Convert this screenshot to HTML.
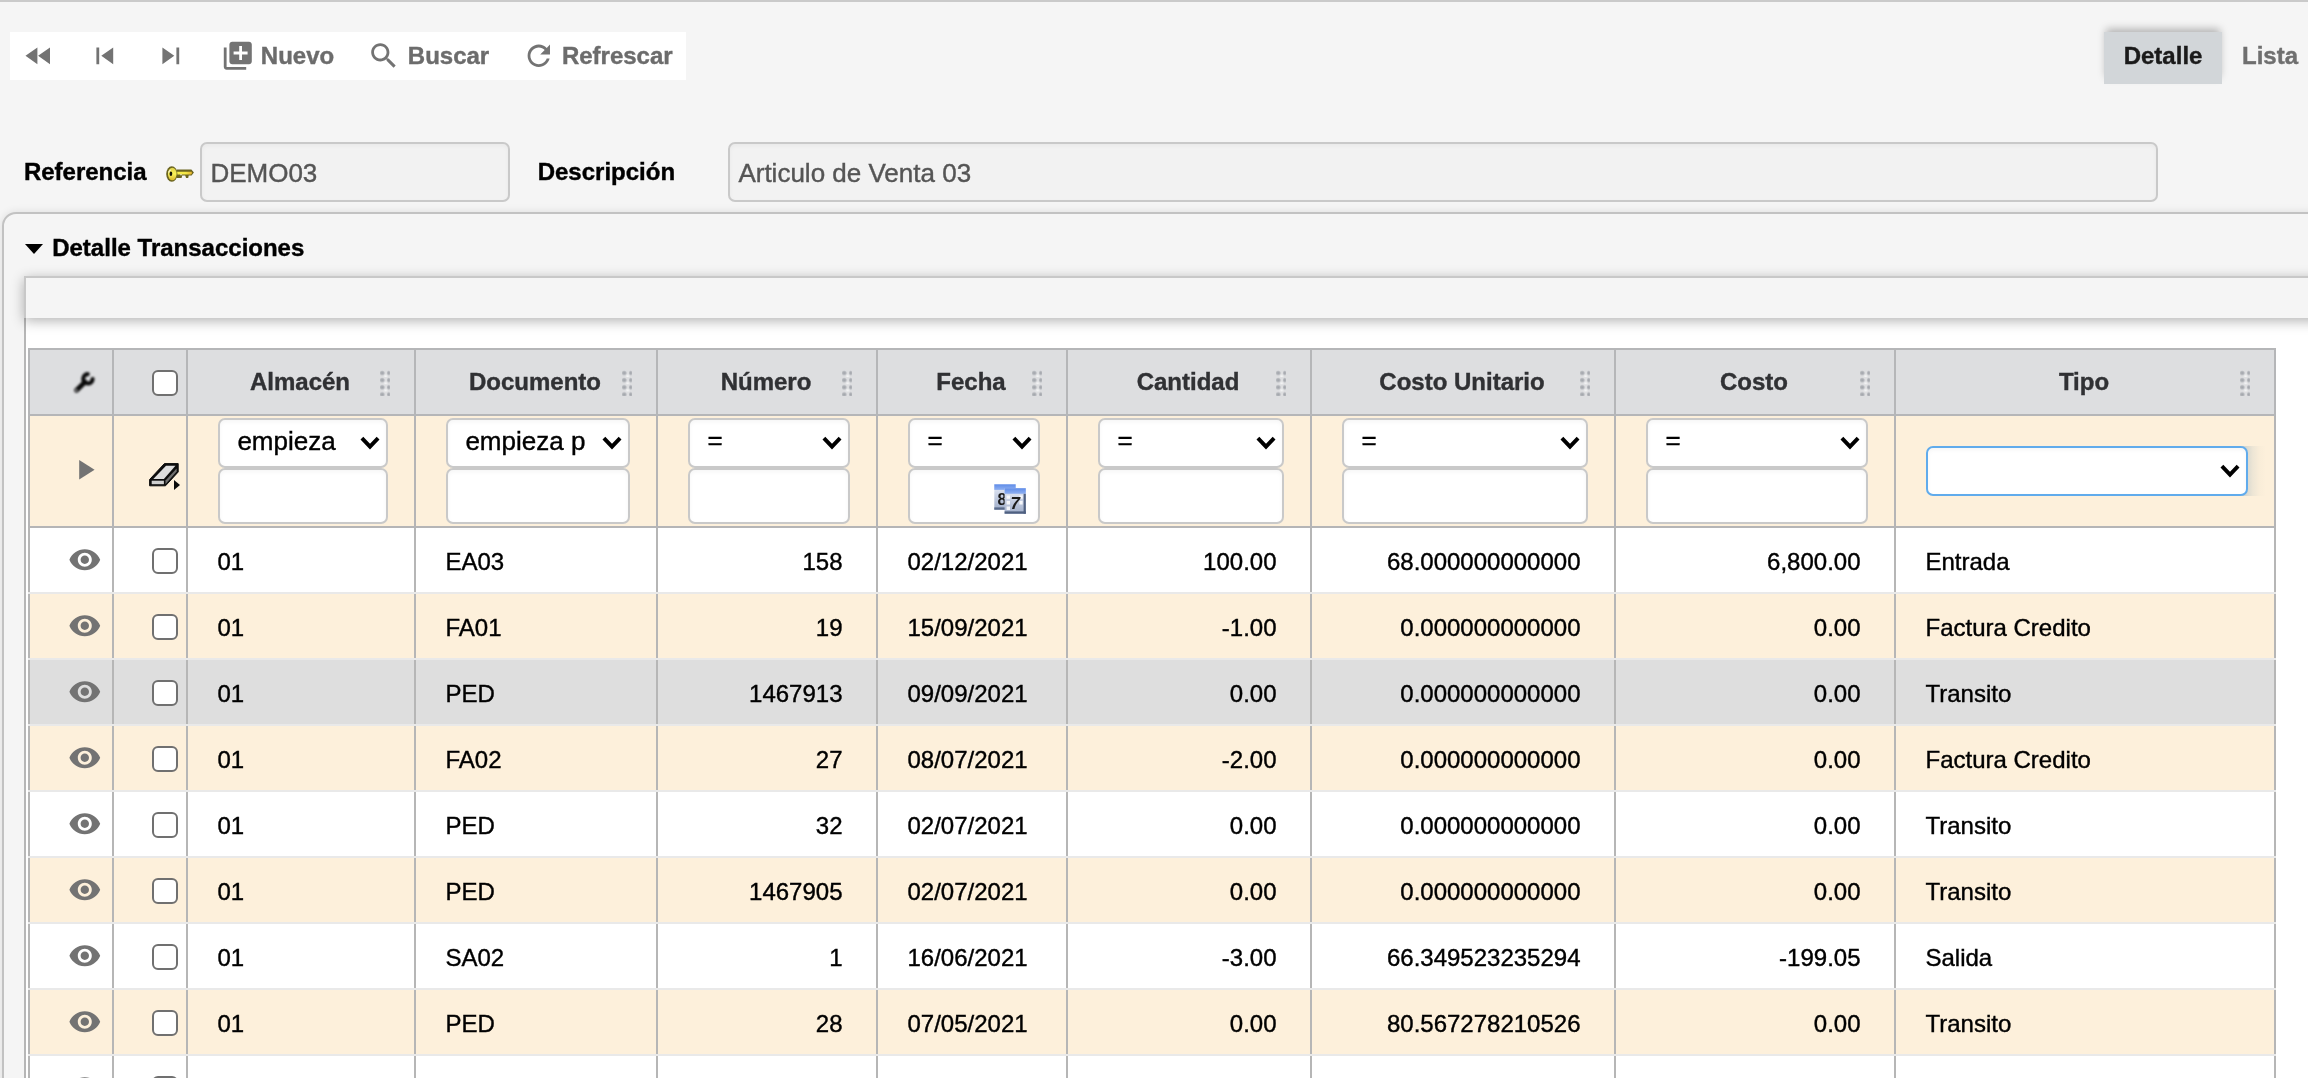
<!DOCTYPE html>
<html lang="es"><head><meta charset="utf-8"><title>Detalle Transacciones</title>
<style>
html,body{margin:0;padding:0;width:2308px;height:1078px}
body{-webkit-text-stroke:0.4px;background:#f5f5f5;font-family:"Liberation Sans",Arial,Helvetica,sans-serif;color:#000}
#page{position:relative;width:2308px;height:1078px;overflow:hidden;background:#f5f5f5}
#aa{position:absolute;left:0;top:0;width:2308px;height:1078px;will-change:transform;transform:translateZ(0)}
#page *{box-sizing:border-box}
.topline{position:absolute;left:0;top:0;width:2308px;height:2px;background:#cacaca}
.mi{position:absolute;display:block}
.toolbar{position:absolute;left:10px;top:32px;width:676px;height:48px;background:#fff}
.tbt{position:absolute;top:8.6px;height:30px;line-height:30px;font-size:24px;font-weight:bold;color:#6c6c6c;white-space:nowrap}
.tab-on{position:absolute;left:2104px;top:32px;width:118px;height:52px;background:#d2d6d9;box-shadow:0 -5px 8px -2px rgba(0,0,0,.28)}
.tab-on span{position:absolute;left:19.7px;top:9px;line-height:30px;font-size:24px;font-weight:bold;color:#1a1a1a}
.tab-off{position:absolute;left:2242px;top:41px;line-height:30px;font-size:24px;font-weight:bold;color:#6f6f6f}
.lbl{position:absolute;top:157px;line-height:30px;font-size:24px;font-weight:bold;color:#000;white-space:nowrap}
.key{position:absolute;left:166px;top:166px;width:28px;height:16px;overflow:visible;filter:blur(.45px)}
.inp{position:absolute;top:142px;height:60px;border:2px solid #c9c9c9;border-radius:7px;background:#f2f2f2;box-shadow:inset 0 2px 4px rgba(0,0,0,.04)}
.inp span{position:absolute;left:8.4px;top:13.9px;line-height:30px;font-size:26px;color:#555;white-space:nowrap}
.fs{position:absolute;left:2px;top:212px;width:2400px;height:1000px;border:2px solid #c2c2c2;border-radius:14px;background:#f5f5f5;box-shadow:0 0 8px rgba(0,0,0,.10)}
.fs-tri{position:absolute;left:21.4px;top:29.6px;width:0;height:0;border-left:9.8px solid transparent;border-right:9.8px solid transparent;border-top:10.5px solid #000}
.fs-title{position:absolute;left:48.2px;top:19.2px;line-height:30px;font-size:24px;font-weight:bold;color:#000;white-space:nowrap}
.gridwrap{position:absolute;left:24px;top:318px;width:2400px;height:900px;background:#fff;border-left:2px solid #b6b6b6}
.gridbar{position:absolute;left:24px;top:276px;width:2400px;height:42px;background:#f5f5f5;border-top:2px solid #c8c8c8;border-left:2px solid #c8c8c8;box-shadow:0 3px 12px rgba(0,0,0,.30)}
.tbl{position:absolute;left:28px;top:348px;width:2248px;height:760px}
.hrow{position:absolute;left:0;top:0;width:2248px;height:68px;background:#b5b6b8}
.hc{position:absolute;top:2px;height:64px;margin-left:2px;background:#dddee0;text-align:center}
.ht{position:absolute;left:0;right:2px;top:17px;line-height:30px;font-size:24px;font-weight:bold;color:#303134;white-space:nowrap}
.grip{position:absolute;right:24px;top:20px;width:10px;height:26px;background-repeat:repeat-y;background-size:10px 7.17px;
 background-image:radial-gradient(ellipse 3px 2.7px at 2.2px 3px,rgba(146,150,157,.8) 0%,rgba(146,150,157,.58) 55%,rgba(146,150,157,0) 100%),radial-gradient(ellipse 2.1px 2.7px at 8.7px 3px,rgba(146,150,157,.8) 0%,rgba(146,150,157,.58) 55%,rgba(146,150,157,0) 100%),radial-gradient(ellipse 2.6px 2.6px at 5.7px 6.4px,rgba(255,255,255,.75) 0%,rgba(255,255,255,0) 100%)}
.wrench{position:absolute;left:38.7px;top:18.5px;width:28px;height:28px;filter:blur(.9px)}
.cb{position:absolute;width:26px;height:26px;border:2px solid #707070;border-radius:6px;background:#fff}
.frow{position:absolute;left:0;top:68px;width:2248px;height:112px;background:#b5b5b6}
.fc{position:absolute;top:0;height:110px;margin-left:2px;background:#fdf0db}
.eraser{position:absolute;left:34px;top:45px;width:34px;height:32px}
.sel{position:absolute;height:50px;border:2px solid #c9c9c9;border-radius:7px;background:#fff;box-shadow:inset 0 2px 4px rgba(0,0,0,.04)}
.sel span{position:absolute;left:17.4px;top:6px;line-height:30px;font-size:26px;color:#000;white-space:nowrap}
.sel span.eq{top:4.9px;left:17.6px}
.sel.foc{border-color:#60abec}
.glow{position:absolute;top:30px;width:24px;height:50px;background:linear-gradient(to right,rgba(150,175,195,.5) 0,rgba(160,180,190,.36) 22%,rgba(175,188,190,.2) 45%,rgba(200,200,190,.08) 72%,rgba(220,210,190,0) 100%)}
.chev{position:absolute;right:5.8px;top:15.8px;width:20px;height:14px}
.fin{position:absolute;height:56px;border:2px solid #c9c9c9;border-radius:7px;background:#fff;box-shadow:inset 0 2px 4px rgba(0,0,0,.04)}
.cal{position:absolute;right:12px;top:14px;width:32px;height:30px;filter:blur(.4px)}
.drow{position:absolute;left:0;width:2248px;height:66px;background:#b6b6b6}
.dc{position:absolute;top:0;height:64px;margin-left:2px;background:#fff}
.drow:after{content:"";position:absolute;left:0;top:64px;width:2248px;height:2px;background:#e9e9e9}
.ro .dc{background:#fdf0db}
.rg .dc{background:#dedede}
.dc span{position:absolute;top:18.7px;line-height:30px;font-size:24px;color:#000;white-space:nowrap}
.dc.l span{left:29.5px}
.dc.r span{right:33.5px}

</style></head>
<body>
<div id="page"><div id="aa">
<div class="topline"></div>
<div class="toolbar" role="toolbar">
<svg class="mi" style="left:12.10px;top:6.60px;width:33.60px;height:33.60px" viewBox="0 0 24 24"><path fill="#737373" d="M11 18V6l-8.5 6 8.5 6zm.5-6l8.5 6V6l-8.5 6z"/></svg>
<svg class="mi" style="left:78.30px;top:6.60px;width:33.60px;height:33.60px" viewBox="0 0 24 24"><path fill="#737373" d="M6 6h2v12H6zm3.5 6l8.5 6V6z"/></svg>
<svg class="mi" style="left:144.35px;top:6.60px;width:33.60px;height:33.60px" viewBox="0 0 24 24"><path fill="#737373" d="M6 18l8.5-6L6 6v12zM16 6v12h2V6h-2z"/></svg>
<svg class="mi" style="left:210.75px;top:7.00px;width:33.60px;height:33.60px" viewBox="0 0 24 24"><path fill="#737373" d="M4 6H2v14c0 1.1.9 2 2 2h14v-2H4V6zm16-4H8c-1.1 0-2 .9-2 2v12c0 1.1.9 2 2 2h12c1.1 0 2-.9 2-2V4c0-1.1-.9-2-2-2zm-1 9h-4v4h-2v-4H9V9h4V5h2v4h4v2z"/></svg>
<span class="tbt" style="left:250.80px">Nuevo</span>
<svg class="mi" style="left:357.30px;top:7.00px;width:33.60px;height:33.60px" viewBox="0 0 24 24"><path fill="#737373" d="M15.5 14h-.79l-.28-.27C15.41 12.59 16 11.11 16 9.5 16 5.91 13.09 3 9.5 3S3 5.91 3 9.5 5.91 16 9.5 16c1.61 0 3.09-.59 4.23-1.57l.27.28v.79l5 4.99L20.49 19l-4.99-5zm-6 0C7.01 14 5 11.99 5 9.5S7.01 5 9.5 5 14 7.01 14 9.5 11.99 14 9.5 14z"/></svg>
<span class="tbt" style="left:397.80px">Buscar</span>
<svg class="mi" style="left:511.60px;top:7.00px;width:33.60px;height:33.60px" viewBox="0 0 24 24"><path fill="#737373" d="M17.65 6.35C16.2 4.9 14.21 4 12 4c-4.42 0-7.99 3.58-7.99 8s3.57 8 7.99 8c3.73 0 6.84-2.55 7.73-6h-2.08c-.82 2.33-3.04 4-5.65 4-3.31 0-6-2.69-6-6s2.69-6 6-6c1.66 0 3.14.69 4.22 1.78L13 11h7V4l-2.35 2.35z"/></svg>
<span class="tbt" style="left:551.90px">Refrescar</span>
</div>
<div class="tab-on" role="tab" aria-selected="true"><span>Detalle</span></div>
<div class="tab-off" role="tab">Lista</div>
<div class="lbl" style="left:23.90px">Referencia</div>
<svg class="key" viewBox="0 0 28 16">
<defs><linearGradient id="kg" x1="0" y1="0" x2="0" y2="1"><stop offset="0" stop-color="#ddd04a"/><stop offset=".5" stop-color="#fbf45a"/><stop offset="1" stop-color="#d6b52c"/></linearGradient>
<linearGradient id="ks" x1="0" y1="0" x2="1" y2="0"><stop offset="0" stop-color="#f7ee4c"/><stop offset=".6" stop-color="#f3e746"/><stop offset="1" stop-color="#e3ae2c"/></linearGradient></defs>
<path d="M10.5 3.6H25.4l2.5 2.9-2.3 3.1h-2.9l-.5 2.3h-2.1l-.9-2.5h-3l-.6 2.6h-5.1z" fill="#6a641f"/>
<path d="M11 5.7H25.6l.5 1.2-1 1.5H11z" fill="url(#ks)"/>
<path d="M14.2 8.2h1.6v1h-1.6z" fill="#f4f1d8"/>
<ellipse cx="5.8" cy="8" rx="5.6" ry="7.8" fill="#6a641f"/>
<ellipse cx="6.3" cy="8" rx="4.3" ry="6.3" fill="url(#kg)"/>
<ellipse cx="4.9" cy="7.7" rx="1.35" ry="2.2" fill="#14140a"/>
<path d="M2.6 6.6c.3-1.3 1.2-2.2 2.2-2.4" stroke="#f3f0d0" stroke-width="1.2" fill="none"/>
</svg>
<div class="inp" role="textbox" aria-readonly="true" style="left:200px;width:310px"><span>DEMO03</span></div>
<div class="lbl" style="left:537.70px">Descripción</div>
<div class="inp" role="textbox" aria-readonly="true" style="left:728px;width:1430px"><span>Articulo de Venta 03</span></div>
<div class="fs">
<div class="fs-tri"></div>
<div class="fs-title">Detalle Transacciones</div>
</div>
<div class="gridwrap"></div>
<div class="gridbar"></div>
<div class="tbl" role="table">
<div class="hrow" role="row">
<div class="hc" role="columnheader" style="left:0px;width:82px">
<svg class="wrench" viewBox="0 0 28 28"><path d="M16 13L7.6 21.2" stroke="#0a0a0a" stroke-width="4.8" stroke-linecap="round" fill="none"/><path d="M18.7 5.1A4.7 4.7 0 1 0 23.6 10" stroke="#0a0a0a" stroke-width="4.1" stroke-linecap="round" fill="none"/><circle cx="7.4" cy="21.3" r="1.15" fill="#c9c9cb"/></svg>
</div>
<div class="hc" role="columnheader" style="left:84px;width:72px">
<span class="cb" role="checkbox" aria-checked="false" style="left:38px;top:20px"></span>
</div>
<div class="hc" role="columnheader" style="left:158px;width:226px">
<span class="ht">Almacén</span><span class="grip"></span>
</div>
<div class="hc" role="columnheader" style="left:386px;width:240px">
<span class="ht">Documento</span><span class="grip"></span>
</div>
<div class="hc" role="columnheader" style="left:628px;width:218px">
<span class="ht">Número</span><span class="grip"></span>
</div>
<div class="hc" role="columnheader" style="left:848px;width:188px">
<span class="ht">Fecha</span><span class="grip"></span>
</div>
<div class="hc" role="columnheader" style="left:1038px;width:242px">
<span class="ht">Cantidad</span><span class="grip"></span>
</div>
<div class="hc" role="columnheader" style="left:1282px;width:302px">
<span class="ht">Costo Unitario</span><span class="grip"></span>
</div>
<div class="hc" role="columnheader" style="left:1586px;width:278px">
<span class="ht">Costo</span><span class="grip"></span>
</div>
<div class="hc" role="columnheader" style="left:1866px;width:378px">
<span class="ht">Tipo</span><span class="grip"></span>
</div>
</div>
<div class="frow" role="row">
<div class="fc" role="cell" style="left:0px;width:82px">
<svg class="mi" style="left:37.80px;top:37.00px;width:33.60px;height:33.60px" viewBox="0 0 24 24"><path fill="#737373" d="M8 5v14l11-7z"/></svg>
</div>
<div class="fc" role="cell" style="left:84px;width:72px">
<svg class="eraser" viewBox="0 0 34 32">
<path d="M1.6 24.8V18.5L16.4 2.6H30.2V11L17.5 24.8z" fill="#0d0d0d" stroke="#0d0d0d" stroke-width="1" stroke-linejoin="round"/>
<path d="M5.3 17.9L18 4.7h9.5L15.9 17.9z" fill="#dedede"/>
<path d="M3.7 19.7h12.2v3.5H3.7z" fill="#cfcfcf"/>
<path d="M17.5 19.5L28.6 7.4v3.1L17.5 23.2z" fill="#707070"/>
<path d="M26 19l6 5-6 5z" fill="#0a0a0a"/>
</svg>
</div>
<div class="fc" role="cell" style="left:158px;width:226px">
<div class="sel" role="combobox" style="left:30px;top:2px;width:170px"><span>empieza</span><svg class="chev" viewBox="0 0 20 14"><path d="M1.9 2.1l8.1 8.5 8.1-8.5" stroke="#000" stroke-width="3.9" fill="none"/></svg></div>
<div class="fin" role="textbox" style="left:30px;top:52px;width:170px">
</div>
</div>
<div class="fc" role="cell" style="left:386px;width:240px">
<div class="sel" role="combobox" style="left:30px;top:2px;width:184px"><span>empieza p</span><svg class="chev" viewBox="0 0 20 14"><path d="M1.9 2.1l8.1 8.5 8.1-8.5" stroke="#000" stroke-width="3.9" fill="none"/></svg></div>
<div class="fin" role="textbox" style="left:30px;top:52px;width:184px">
</div>
</div>
<div class="fc" role="cell" style="left:628px;width:218px">
<div class="sel" role="combobox" style="left:30px;top:2px;width:162px"><span class="eq">=</span><svg class="chev" viewBox="0 0 20 14"><path d="M1.9 2.1l8.1 8.5 8.1-8.5" stroke="#000" stroke-width="3.9" fill="none"/></svg></div>
<div class="fin" role="textbox" style="left:30px;top:52px;width:162px">
</div>
</div>
<div class="fc" role="cell" style="left:848px;width:188px">
<div class="sel" role="combobox" style="left:30px;top:2px;width:132px"><span class="eq">=</span><svg class="chev" viewBox="0 0 20 14"><path d="M1.9 2.1l8.1 8.5 8.1-8.5" stroke="#000" stroke-width="3.9" fill="none"/></svg></div>
<div class="fin" role="textbox" style="left:30px;top:52px;width:132px">
<svg class="cal" viewBox="0 0 32 30">
<defs><linearGradient id="cb" x1="0" y1="0" x2="0" y2="1"><stop offset="0" stop-color="#e9eefa"/><stop offset="1" stop-color="#9fadc9"/></linearGradient>
<linearGradient id="ch" x1="0" y1="0" x2="0" y2="1"><stop offset="0" stop-color="#5f8ce8"/><stop offset="1" stop-color="#8fb0f2"/></linearGradient></defs>
<rect x="0.3" y="0.3" width="21.4" height="25.4" fill="url(#cb)"/>
<rect x="0.3" y="0.3" width="21.4" height="5.6" fill="url(#ch)"/>
<rect x="0.3" y="23.4" width="21.4" height="2.3" fill="#5a6c8c"/>
<text x="3.4" y="20.6" font-family="Liberation Sans, sans-serif" style="font-weight:700" font-size="16" fill="#1a1a1a">8</text>
<rect x="10.6" y="4.2" width="21.2" height="25.5" fill="url(#cb)"/>
<rect x="10.6" y="4.2" width="21.2" height="5.6" fill="url(#ch)"/>
<rect x="29.6" y="9.8" width="2.2" height="19.9" fill="#4f6080"/>
<rect x="10.6" y="27.4" width="21.2" height="2.3" fill="#4f6080"/>
<path d="M12.6 11.4h3.4v3.4h-3.4zM12.6 17h3.4v3.4h-3.4zM12.6 22.6h3.4v3.4h-3.4zM25.4 11.4h3.2v3.4h-3.2zM25.4 17h3.2v3.4h-3.2z" fill="#fff" opacity=".85"/>
<text x="16.6" y="25.4" font-family="Liberation Sans, sans-serif" style="font-weight:700;font-style:italic" font-size="17" fill="#1c1c1c">7</text>
</svg>
</div>
</div>
<div class="fc" role="cell" style="left:1038px;width:242px">
<div class="sel" role="combobox" style="left:30px;top:2px;width:186px"><span class="eq">=</span><svg class="chev" viewBox="0 0 20 14"><path d="M1.9 2.1l8.1 8.5 8.1-8.5" stroke="#000" stroke-width="3.9" fill="none"/></svg></div>
<div class="fin" role="textbox" style="left:30px;top:52px;width:186px">
</div>
</div>
<div class="fc" role="cell" style="left:1282px;width:302px">
<div class="sel" role="combobox" style="left:30px;top:2px;width:246px"><span class="eq">=</span><svg class="chev" viewBox="0 0 20 14"><path d="M1.9 2.1l8.1 8.5 8.1-8.5" stroke="#000" stroke-width="3.9" fill="none"/></svg></div>
<div class="fin" role="textbox" style="left:30px;top:52px;width:246px">
</div>
</div>
<div class="fc" role="cell" style="left:1586px;width:278px">
<div class="sel" role="combobox" style="left:30px;top:2px;width:222px"><span class="eq">=</span><svg class="chev" viewBox="0 0 20 14"><path d="M1.9 2.1l8.1 8.5 8.1-8.5" stroke="#000" stroke-width="3.9" fill="none"/></svg></div>
<div class="fin" role="textbox" style="left:30px;top:52px;width:222px">
</div>
</div>
<div class="fc" role="cell" style="left:1866px;width:378px">
<div class="glow" style="left:346px"></div>
<div class="sel foc" role="combobox" style="left:30px;top:30px;width:322px"><svg class="chev" viewBox="0 0 20 14"><path d="M1.9 2.1l8.1 8.5 8.1-8.5" stroke="#000" stroke-width="3.9" fill="none"/></svg></div>
</div>
</div>
<div class="drow rw" role="row" style="top:180px">
<div class="dc" role="cell" style="left:0px;width:82px">
<svg class="mi" style="left:38.30px;top:15.05px;width:33.60px;height:33.60px" viewBox="0 0 24 24"><path fill="#737373" d="M12 4.5C7 4.5 2.73 7.61 1 12c1.73 4.39 6 7.5 11 7.5s9.27-3.11 11-7.5c-1.73-4.39-6-7.5-11-7.5zM12 17c-2.76 0-5-2.24-5-5s2.24-5 5-5 5 2.24 5 5-2.24 5-5 5zm0-8c-1.66 0-3 1.34-3 3s1.34 3 3 3 3-1.34 3-3-1.34-3-3-3z"/></svg>
</div>
<div class="dc" role="cell" style="left:84px;width:72px">
<span class="cb" role="checkbox" aria-checked="false" style="left:38px;top:20px"></span>
</div>
<div class="dc l" role="cell" style="left:158px;width:226px">
<span>01</span>
</div>
<div class="dc l" role="cell" style="left:386px;width:240px">
<span>EA03</span>
</div>
<div class="dc r" role="cell" style="left:628px;width:218px">
<span>158</span>
</div>
<div class="dc l" role="cell" style="left:848px;width:188px">
<span>02/12/2021</span>
</div>
<div class="dc r" role="cell" style="left:1038px;width:242px">
<span>100.00</span>
</div>
<div class="dc r" role="cell" style="left:1282px;width:302px">
<span>68.000000000000</span>
</div>
<div class="dc r" role="cell" style="left:1586px;width:278px">
<span>6,800.00</span>
</div>
<div class="dc l" role="cell" style="left:1866px;width:378px">
<span>Entrada</span>
</div>
</div>
<div class="drow ro" role="row" style="top:246px">
<div class="dc" role="cell" style="left:0px;width:82px">
<svg class="mi" style="left:38.30px;top:15.05px;width:33.60px;height:33.60px" viewBox="0 0 24 24"><path fill="#737373" d="M12 4.5C7 4.5 2.73 7.61 1 12c1.73 4.39 6 7.5 11 7.5s9.27-3.11 11-7.5c-1.73-4.39-6-7.5-11-7.5zM12 17c-2.76 0-5-2.24-5-5s2.24-5 5-5 5 2.24 5 5-2.24 5-5 5zm0-8c-1.66 0-3 1.34-3 3s1.34 3 3 3 3-1.34 3-3-1.34-3-3-3z"/></svg>
</div>
<div class="dc" role="cell" style="left:84px;width:72px">
<span class="cb" role="checkbox" aria-checked="false" style="left:38px;top:20px"></span>
</div>
<div class="dc l" role="cell" style="left:158px;width:226px">
<span>01</span>
</div>
<div class="dc l" role="cell" style="left:386px;width:240px">
<span>FA01</span>
</div>
<div class="dc r" role="cell" style="left:628px;width:218px">
<span>19</span>
</div>
<div class="dc l" role="cell" style="left:848px;width:188px">
<span>15/09/2021</span>
</div>
<div class="dc r" role="cell" style="left:1038px;width:242px">
<span>-1.00</span>
</div>
<div class="dc r" role="cell" style="left:1282px;width:302px">
<span>0.000000000000</span>
</div>
<div class="dc r" role="cell" style="left:1586px;width:278px">
<span>0.00</span>
</div>
<div class="dc l" role="cell" style="left:1866px;width:378px">
<span>Factura Credito</span>
</div>
</div>
<div class="drow rg" role="row" style="top:312px">
<div class="dc" role="cell" style="left:0px;width:82px">
<svg class="mi" style="left:38.30px;top:15.05px;width:33.60px;height:33.60px" viewBox="0 0 24 24"><path fill="#737373" d="M12 4.5C7 4.5 2.73 7.61 1 12c1.73 4.39 6 7.5 11 7.5s9.27-3.11 11-7.5c-1.73-4.39-6-7.5-11-7.5zM12 17c-2.76 0-5-2.24-5-5s2.24-5 5-5 5 2.24 5 5-2.24 5-5 5zm0-8c-1.66 0-3 1.34-3 3s1.34 3 3 3 3-1.34 3-3-1.34-3-3-3z"/></svg>
</div>
<div class="dc" role="cell" style="left:84px;width:72px">
<span class="cb" role="checkbox" aria-checked="false" style="left:38px;top:20px"></span>
</div>
<div class="dc l" role="cell" style="left:158px;width:226px">
<span>01</span>
</div>
<div class="dc l" role="cell" style="left:386px;width:240px">
<span>PED</span>
</div>
<div class="dc r" role="cell" style="left:628px;width:218px">
<span>1467913</span>
</div>
<div class="dc l" role="cell" style="left:848px;width:188px">
<span>09/09/2021</span>
</div>
<div class="dc r" role="cell" style="left:1038px;width:242px">
<span>0.00</span>
</div>
<div class="dc r" role="cell" style="left:1282px;width:302px">
<span>0.000000000000</span>
</div>
<div class="dc r" role="cell" style="left:1586px;width:278px">
<span>0.00</span>
</div>
<div class="dc l" role="cell" style="left:1866px;width:378px">
<span>Transito</span>
</div>
</div>
<div class="drow ro" role="row" style="top:378px">
<div class="dc" role="cell" style="left:0px;width:82px">
<svg class="mi" style="left:38.30px;top:15.05px;width:33.60px;height:33.60px" viewBox="0 0 24 24"><path fill="#737373" d="M12 4.5C7 4.5 2.73 7.61 1 12c1.73 4.39 6 7.5 11 7.5s9.27-3.11 11-7.5c-1.73-4.39-6-7.5-11-7.5zM12 17c-2.76 0-5-2.24-5-5s2.24-5 5-5 5 2.24 5 5-2.24 5-5 5zm0-8c-1.66 0-3 1.34-3 3s1.34 3 3 3 3-1.34 3-3-1.34-3-3-3z"/></svg>
</div>
<div class="dc" role="cell" style="left:84px;width:72px">
<span class="cb" role="checkbox" aria-checked="false" style="left:38px;top:20px"></span>
</div>
<div class="dc l" role="cell" style="left:158px;width:226px">
<span>01</span>
</div>
<div class="dc l" role="cell" style="left:386px;width:240px">
<span>FA02</span>
</div>
<div class="dc r" role="cell" style="left:628px;width:218px">
<span>27</span>
</div>
<div class="dc l" role="cell" style="left:848px;width:188px">
<span>08/07/2021</span>
</div>
<div class="dc r" role="cell" style="left:1038px;width:242px">
<span>-2.00</span>
</div>
<div class="dc r" role="cell" style="left:1282px;width:302px">
<span>0.000000000000</span>
</div>
<div class="dc r" role="cell" style="left:1586px;width:278px">
<span>0.00</span>
</div>
<div class="dc l" role="cell" style="left:1866px;width:378px">
<span>Factura Credito</span>
</div>
</div>
<div class="drow rw" role="row" style="top:444px">
<div class="dc" role="cell" style="left:0px;width:82px">
<svg class="mi" style="left:38.30px;top:15.05px;width:33.60px;height:33.60px" viewBox="0 0 24 24"><path fill="#737373" d="M12 4.5C7 4.5 2.73 7.61 1 12c1.73 4.39 6 7.5 11 7.5s9.27-3.11 11-7.5c-1.73-4.39-6-7.5-11-7.5zM12 17c-2.76 0-5-2.24-5-5s2.24-5 5-5 5 2.24 5 5-2.24 5-5 5zm0-8c-1.66 0-3 1.34-3 3s1.34 3 3 3 3-1.34 3-3-1.34-3-3-3z"/></svg>
</div>
<div class="dc" role="cell" style="left:84px;width:72px">
<span class="cb" role="checkbox" aria-checked="false" style="left:38px;top:20px"></span>
</div>
<div class="dc l" role="cell" style="left:158px;width:226px">
<span>01</span>
</div>
<div class="dc l" role="cell" style="left:386px;width:240px">
<span>PED</span>
</div>
<div class="dc r" role="cell" style="left:628px;width:218px">
<span>32</span>
</div>
<div class="dc l" role="cell" style="left:848px;width:188px">
<span>02/07/2021</span>
</div>
<div class="dc r" role="cell" style="left:1038px;width:242px">
<span>0.00</span>
</div>
<div class="dc r" role="cell" style="left:1282px;width:302px">
<span>0.000000000000</span>
</div>
<div class="dc r" role="cell" style="left:1586px;width:278px">
<span>0.00</span>
</div>
<div class="dc l" role="cell" style="left:1866px;width:378px">
<span>Transito</span>
</div>
</div>
<div class="drow ro" role="row" style="top:510px">
<div class="dc" role="cell" style="left:0px;width:82px">
<svg class="mi" style="left:38.30px;top:15.05px;width:33.60px;height:33.60px" viewBox="0 0 24 24"><path fill="#737373" d="M12 4.5C7 4.5 2.73 7.61 1 12c1.73 4.39 6 7.5 11 7.5s9.27-3.11 11-7.5c-1.73-4.39-6-7.5-11-7.5zM12 17c-2.76 0-5-2.24-5-5s2.24-5 5-5 5 2.24 5 5-2.24 5-5 5zm0-8c-1.66 0-3 1.34-3 3s1.34 3 3 3 3-1.34 3-3-1.34-3-3-3z"/></svg>
</div>
<div class="dc" role="cell" style="left:84px;width:72px">
<span class="cb" role="checkbox" aria-checked="false" style="left:38px;top:20px"></span>
</div>
<div class="dc l" role="cell" style="left:158px;width:226px">
<span>01</span>
</div>
<div class="dc l" role="cell" style="left:386px;width:240px">
<span>PED</span>
</div>
<div class="dc r" role="cell" style="left:628px;width:218px">
<span>1467905</span>
</div>
<div class="dc l" role="cell" style="left:848px;width:188px">
<span>02/07/2021</span>
</div>
<div class="dc r" role="cell" style="left:1038px;width:242px">
<span>0.00</span>
</div>
<div class="dc r" role="cell" style="left:1282px;width:302px">
<span>0.000000000000</span>
</div>
<div class="dc r" role="cell" style="left:1586px;width:278px">
<span>0.00</span>
</div>
<div class="dc l" role="cell" style="left:1866px;width:378px">
<span>Transito</span>
</div>
</div>
<div class="drow rw" role="row" style="top:576px">
<div class="dc" role="cell" style="left:0px;width:82px">
<svg class="mi" style="left:38.30px;top:15.05px;width:33.60px;height:33.60px" viewBox="0 0 24 24"><path fill="#737373" d="M12 4.5C7 4.5 2.73 7.61 1 12c1.73 4.39 6 7.5 11 7.5s9.27-3.11 11-7.5c-1.73-4.39-6-7.5-11-7.5zM12 17c-2.76 0-5-2.24-5-5s2.24-5 5-5 5 2.24 5 5-2.24 5-5 5zm0-8c-1.66 0-3 1.34-3 3s1.34 3 3 3 3-1.34 3-3-1.34-3-3-3z"/></svg>
</div>
<div class="dc" role="cell" style="left:84px;width:72px">
<span class="cb" role="checkbox" aria-checked="false" style="left:38px;top:20px"></span>
</div>
<div class="dc l" role="cell" style="left:158px;width:226px">
<span>01</span>
</div>
<div class="dc l" role="cell" style="left:386px;width:240px">
<span>SA02</span>
</div>
<div class="dc r" role="cell" style="left:628px;width:218px">
<span>1</span>
</div>
<div class="dc l" role="cell" style="left:848px;width:188px">
<span>16/06/2021</span>
</div>
<div class="dc r" role="cell" style="left:1038px;width:242px">
<span>-3.00</span>
</div>
<div class="dc r" role="cell" style="left:1282px;width:302px">
<span>66.349523235294</span>
</div>
<div class="dc r" role="cell" style="left:1586px;width:278px">
<span>-199.05</span>
</div>
<div class="dc l" role="cell" style="left:1866px;width:378px">
<span>Salida</span>
</div>
</div>
<div class="drow ro" role="row" style="top:642px">
<div class="dc" role="cell" style="left:0px;width:82px">
<svg class="mi" style="left:38.30px;top:15.05px;width:33.60px;height:33.60px" viewBox="0 0 24 24"><path fill="#737373" d="M12 4.5C7 4.5 2.73 7.61 1 12c1.73 4.39 6 7.5 11 7.5s9.27-3.11 11-7.5c-1.73-4.39-6-7.5-11-7.5zM12 17c-2.76 0-5-2.24-5-5s2.24-5 5-5 5 2.24 5 5-2.24 5-5 5zm0-8c-1.66 0-3 1.34-3 3s1.34 3 3 3 3-1.34 3-3-1.34-3-3-3z"/></svg>
</div>
<div class="dc" role="cell" style="left:84px;width:72px">
<span class="cb" role="checkbox" aria-checked="false" style="left:38px;top:20px"></span>
</div>
<div class="dc l" role="cell" style="left:158px;width:226px">
<span>01</span>
</div>
<div class="dc l" role="cell" style="left:386px;width:240px">
<span>PED</span>
</div>
<div class="dc r" role="cell" style="left:628px;width:218px">
<span>28</span>
</div>
<div class="dc l" role="cell" style="left:848px;width:188px">
<span>07/05/2021</span>
</div>
<div class="dc r" role="cell" style="left:1038px;width:242px">
<span>0.00</span>
</div>
<div class="dc r" role="cell" style="left:1282px;width:302px">
<span>80.567278210526</span>
</div>
<div class="dc r" role="cell" style="left:1586px;width:278px">
<span>0.00</span>
</div>
<div class="dc l" role="cell" style="left:1866px;width:378px">
<span>Transito</span>
</div>
</div>
<div class="drow rw" role="row" style="top:708px">
<div class="dc" role="cell" style="left:0px;width:82px">
<svg class="mi" style="left:38.30px;top:15.05px;width:33.60px;height:33.60px" viewBox="0 0 24 24"><path fill="#737373" d="M12 4.5C7 4.5 2.73 7.61 1 12c1.73 4.39 6 7.5 11 7.5s9.27-3.11 11-7.5c-1.73-4.39-6-7.5-11-7.5zM12 17c-2.76 0-5-2.24-5-5s2.24-5 5-5 5 2.24 5 5-2.24 5-5 5zm0-8c-1.66 0-3 1.34-3 3s1.34 3 3 3 3-1.34 3-3-1.34-3-3-3z"/></svg>
</div>
<div class="dc" role="cell" style="left:84px;width:72px">
<span class="cb" role="checkbox" aria-checked="false" style="left:38px;top:20px"></span>
</div>
<div class="dc l" role="cell" style="left:158px;width:226px">
<span>01</span>
</div>
<div class="dc l" role="cell" style="left:386px;width:240px">
<span>PED</span>
</div>
<div class="dc r" role="cell" style="left:628px;width:218px">
<span>26</span>
</div>
<div class="dc l" role="cell" style="left:848px;width:188px">
<span>07/05/2021</span>
</div>
<div class="dc r" role="cell" style="left:1038px;width:242px">
<span>0.00</span>
</div>
<div class="dc r" role="cell" style="left:1282px;width:302px">
<span>0.000000000000</span>
</div>
<div class="dc r" role="cell" style="left:1586px;width:278px">
<span>0.00</span>
</div>
<div class="dc l" role="cell" style="left:1866px;width:378px">
<span>Transito</span>
</div>
</div>
</div>
</div></div>
</body></html>
